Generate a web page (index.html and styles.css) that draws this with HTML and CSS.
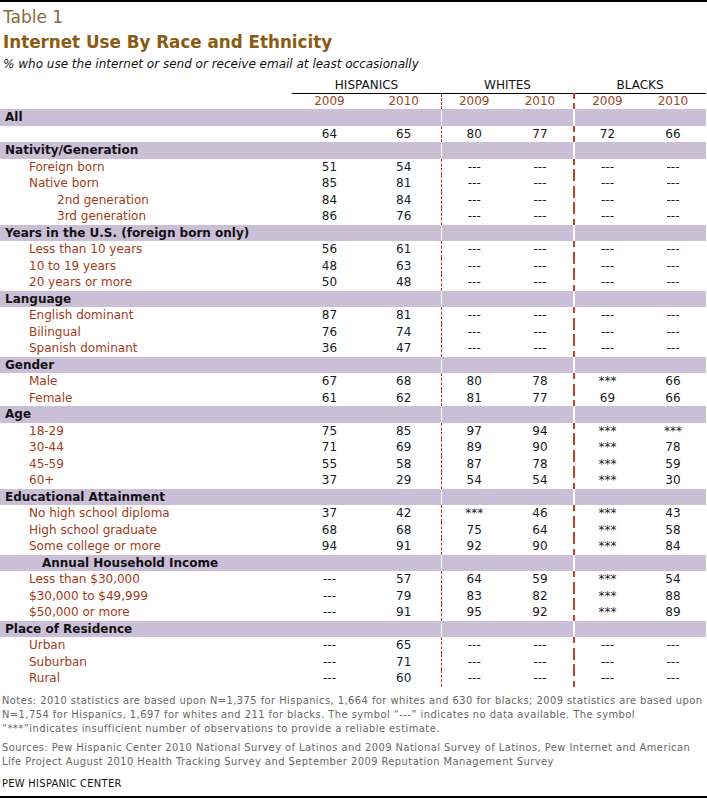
FILE: index.html
```html
<!DOCTYPE html>
<html>
<head>
<meta charset="utf-8">
<link rel="stylesheet" href="styles.css">
</head>
<body>
<div class="page">
  <div class="kicker">Table 1</div>
  <h1 class="title">Internet Use By Race and Ethnicity</h1>
  <p class="subtitle">% who use the internet or send or receive email at least occasionally</p>
  <table class="data">
    <colgroup>
      <col class="c-label"><col class="c-h1"><col class="c-h2"><col class="c-w1"><col class="c-w2"><col class="c-b1"><col class="c-b2">
    </colgroup>
    <thead>
      <tr class="groups">
        <th></th>
        <th colspan="2" class="grp">HISPANICS</th>
        <th colspan="2" class="grp">WHITES</th>
        <th colspan="2" class="grp">BLACKS</th>
      </tr>
      <tr class="years">
        <th></th>
        <th>2009</th><th>2010</th>
        <th class="d1">2009</th><th>2010</th>
        <th class="d2">2009</th><th>2010</th>
      </tr>
    </thead>
    <tbody>
      <tr class="band"><td>All</td><td></td><td></td><td class="d1"></td><td></td><td class="d2"></td><td></td></tr>
      <tr><td></td><td>64</td><td>65</td><td class="d1">80</td><td>77</td><td class="d2">72</td><td>66</td></tr>

      <tr class="band"><td>Nativity/Generation</td><td></td><td></td><td class="d1"></td><td></td><td class="d2"></td><td></td></tr>
      <tr><td class="l1">Foreign born</td><td>51</td><td>54</td><td class="d1">---</td><td>---</td><td class="d2">---</td><td>---</td></tr>
      <tr><td class="l1">Native born</td><td>85</td><td>81</td><td class="d1">---</td><td>---</td><td class="d2">---</td><td>---</td></tr>
      <tr><td class="l2">2nd generation</td><td>84</td><td>84</td><td class="d1">---</td><td>---</td><td class="d2">---</td><td>---</td></tr>
      <tr><td class="l2">3rd generation</td><td>86</td><td>76</td><td class="d1">---</td><td>---</td><td class="d2">---</td><td>---</td></tr>

      <tr class="band"><td>Years in the U.S. (foreign born only)</td><td></td><td></td><td class="d1"></td><td></td><td class="d2"></td><td></td></tr>
      <tr><td class="l1">Less than 10 years</td><td>56</td><td>61</td><td class="d1">---</td><td>---</td><td class="d2">---</td><td>---</td></tr>
      <tr><td class="l1">10 to 19 years</td><td>48</td><td>63</td><td class="d1">---</td><td>---</td><td class="d2">---</td><td>---</td></tr>
      <tr><td class="l1">20 years or more</td><td>50</td><td>48</td><td class="d1">---</td><td>---</td><td class="d2">---</td><td>---</td></tr>

      <tr class="band"><td>Language</td><td></td><td></td><td class="d1"></td><td></td><td class="d2"></td><td></td></tr>
      <tr><td class="l1">English dominant</td><td>87</td><td>81</td><td class="d1">---</td><td>---</td><td class="d2">---</td><td>---</td></tr>
      <tr><td class="l1">Bilingual</td><td>76</td><td>74</td><td class="d1">---</td><td>---</td><td class="d2">---</td><td>---</td></tr>
      <tr><td class="l1">Spanish dominant</td><td>36</td><td>47</td><td class="d1">---</td><td>---</td><td class="d2">---</td><td>---</td></tr>

      <tr class="band"><td>Gender</td><td></td><td></td><td class="d1"></td><td></td><td class="d2"></td><td></td></tr>
      <tr><td class="l1">Male</td><td>67</td><td>68</td><td class="d1">80</td><td>78</td><td class="d2">***</td><td>66</td></tr>
      <tr><td class="l1">Female</td><td>61</td><td>62</td><td class="d1">81</td><td>77</td><td class="d2">69</td><td>66</td></tr>

      <tr class="band"><td>Age</td><td></td><td></td><td class="d1"></td><td></td><td class="d2"></td><td></td></tr>
      <tr><td class="l1">18-29</td><td>75</td><td>85</td><td class="d1">97</td><td>94</td><td class="d2">***</td><td>***</td></tr>
      <tr><td class="l1">30-44</td><td>71</td><td>69</td><td class="d1">89</td><td>90</td><td class="d2">***</td><td>78</td></tr>
      <tr><td class="l1">45-59</td><td>55</td><td>58</td><td class="d1">87</td><td>78</td><td class="d2">***</td><td>59</td></tr>
      <tr><td class="l1">60+</td><td>37</td><td>29</td><td class="d1">54</td><td>54</td><td class="d2">***</td><td>30</td></tr>

      <tr class="band"><td>Educational Attainment</td><td></td><td></td><td class="d1"></td><td></td><td class="d2"></td><td></td></tr>
      <tr><td class="l1">No high school diploma</td><td>37</td><td>42</td><td class="d1">***</td><td>46</td><td class="d2">***</td><td>43</td></tr>
      <tr><td class="l1">High school graduate</td><td>68</td><td>68</td><td class="d1">75</td><td>64</td><td class="d2">***</td><td>58</td></tr>
      <tr><td class="l1">Some college or more</td><td>94</td><td>91</td><td class="d1">92</td><td>90</td><td class="d2">***</td><td>84</td></tr>

      <tr class="band"><td class="centered">Annual Household Income</td><td></td><td></td><td class="d1"></td><td></td><td class="d2"></td><td></td></tr>
      <tr><td class="l1">Less than $30,000</td><td>---</td><td>57</td><td class="d1">64</td><td>59</td><td class="d2">***</td><td>54</td></tr>
      <tr><td class="l1">$30,000 to $49,999</td><td>---</td><td>79</td><td class="d1">83</td><td>82</td><td class="d2">***</td><td>88</td></tr>
      <tr><td class="l1">$50,000 or more</td><td>---</td><td>91</td><td class="d1">95</td><td>92</td><td class="d2">***</td><td>89</td></tr>

      <tr class="band"><td>Place of Residence</td><td></td><td></td><td class="d1"></td><td></td><td class="d2"></td><td></td></tr>
      <tr><td class="l1">Urban</td><td>---</td><td>65</td><td class="d1">---</td><td>---</td><td class="d2">---</td><td>---</td></tr>
      <tr><td class="l1">Suburban</td><td>---</td><td>71</td><td class="d1">---</td><td>---</td><td class="d2">---</td><td>---</td></tr>
      <tr><td class="l1">Rural</td><td>---</td><td>60</td><td class="d1">---</td><td>---</td><td class="d2">---</td><td>---</td></tr>
    </tbody>
  </table>
  <p class="note">Notes: 2010 statistics are based upon N=1,375 for Hispanics, 1,664 for whites and 630 for blacks; 2009 statistics are based upon N=1,754 for Hispanics, 1,697 for whites and 211 for blacks. The symbol “---” indicates no data available. The symbol “***”indicates insufficient number of observations to provide a reliable estimate.</p>
  <p class="note sources">Sources: Pew Hispanic Center 2010 National Survey of Latinos and 2009 National Survey of Latinos, Pew Internet and American Life Project August 2010 Health Tracking Survey and September 2009 Reputation Management Survey</p>
  <p class="credit">PEW HISPANIC CENTER</p>
</div>
</body>
</html>
```

FILE: styles.css
```css
html, body {
  margin: 0;
  padding: 0;
  background: #fff;
}

.page {
  width: 707px;
  height: 798px;
  box-sizing: border-box;
  border-top: 2px solid #000;
  border-bottom: 2px solid #000;
  font-family: "DejaVu Sans", Verdana, sans-serif;
  color: #111;
  overflow: hidden;
}

.kicker {
  margin: 5px 0 0 3px;
  font-size: 17px;
  line-height: 20px;
  color: #8a6a3c;
}

.title {
  margin: 5px 0 0 3px;
  font-size: 16.75px;
  line-height: 20px;
  font-weight: bold;
  color: #8b5a12;
}

.subtitle {
  margin: 4px 0 0 3px;
  font-size: 12px;
  line-height: 16px;
  font-style: italic;
  color: #111;
}

.data {
  margin-top: 6px;
  width: 706px;
  table-layout: fixed;
  border-collapse: collapse;
  font-size: 12px;
}

.c-label { width: 292px; }
.c-h1 { width: 75px; }
.c-h2 { width: 74px; }
.c-w1 { width: 66px; }
.c-w2 { width: 67px; }
.c-b1 { width: 66px; }
.c-b2 { width: 66px; }

.data th,
.data td {
  padding: 0;
  text-align: center;
  white-space: nowrap;
  overflow: visible;
}

.groups th {
  font-weight: normal;
  height: 15px;
  line-height: 15px;
  vertical-align: bottom;
  color: #111;
}

.groups th.grp {
  border-bottom: 1px solid #000;
}

.years th {
  font-weight: normal;
  height: 15px;
  line-height: 15px;
  color: #a0461f;
}

.data tbody tr {
  height: 16.5px;
}

.data tbody td {
  height: 16.5px;
  line-height: 16px;
  color: #151a24;
}

.data .d1 {
  border-left: 1px dashed #c8301c;
}

.data .d2 {
  border-left: 2px dashed #c0432e;
}

.band td {
  background: #cbbfd8;
}

.band td:first-child {
  text-align: left;
  padding-left: 5px;
  font-weight: bold;
  color: #111;
}

.band td.centered {
  padding-left: 42px;
}

.band .d1,
.band .d2 {
  border-left-style: solid;
  border-left-color: #fff;
}

.data td.l1,
.data td.l2 {
  text-align: left;
  color: #a23b18;
}

.data td.l1 { padding-left: 29px; }
.data td.l2 { padding-left: 57px; }

.note {
  margin: 7px 0 0 2px;
  font-family: "DejaVu Sans Condensed", "Liberation Sans Narrow", sans-serif;
  font-size: 11px;
  letter-spacing: 0.45px;
  line-height: 14px;
  color: #666;
}

.note.sources {
  margin-top: 5px;
}

.credit {
  margin: 8px 0 0 2px;
  font-family: "DejaVu Sans Condensed", "Liberation Sans Narrow", sans-serif;
  font-size: 11px;
  letter-spacing: 0.3px;
  line-height: 14px;
  color: #111;
}
```
